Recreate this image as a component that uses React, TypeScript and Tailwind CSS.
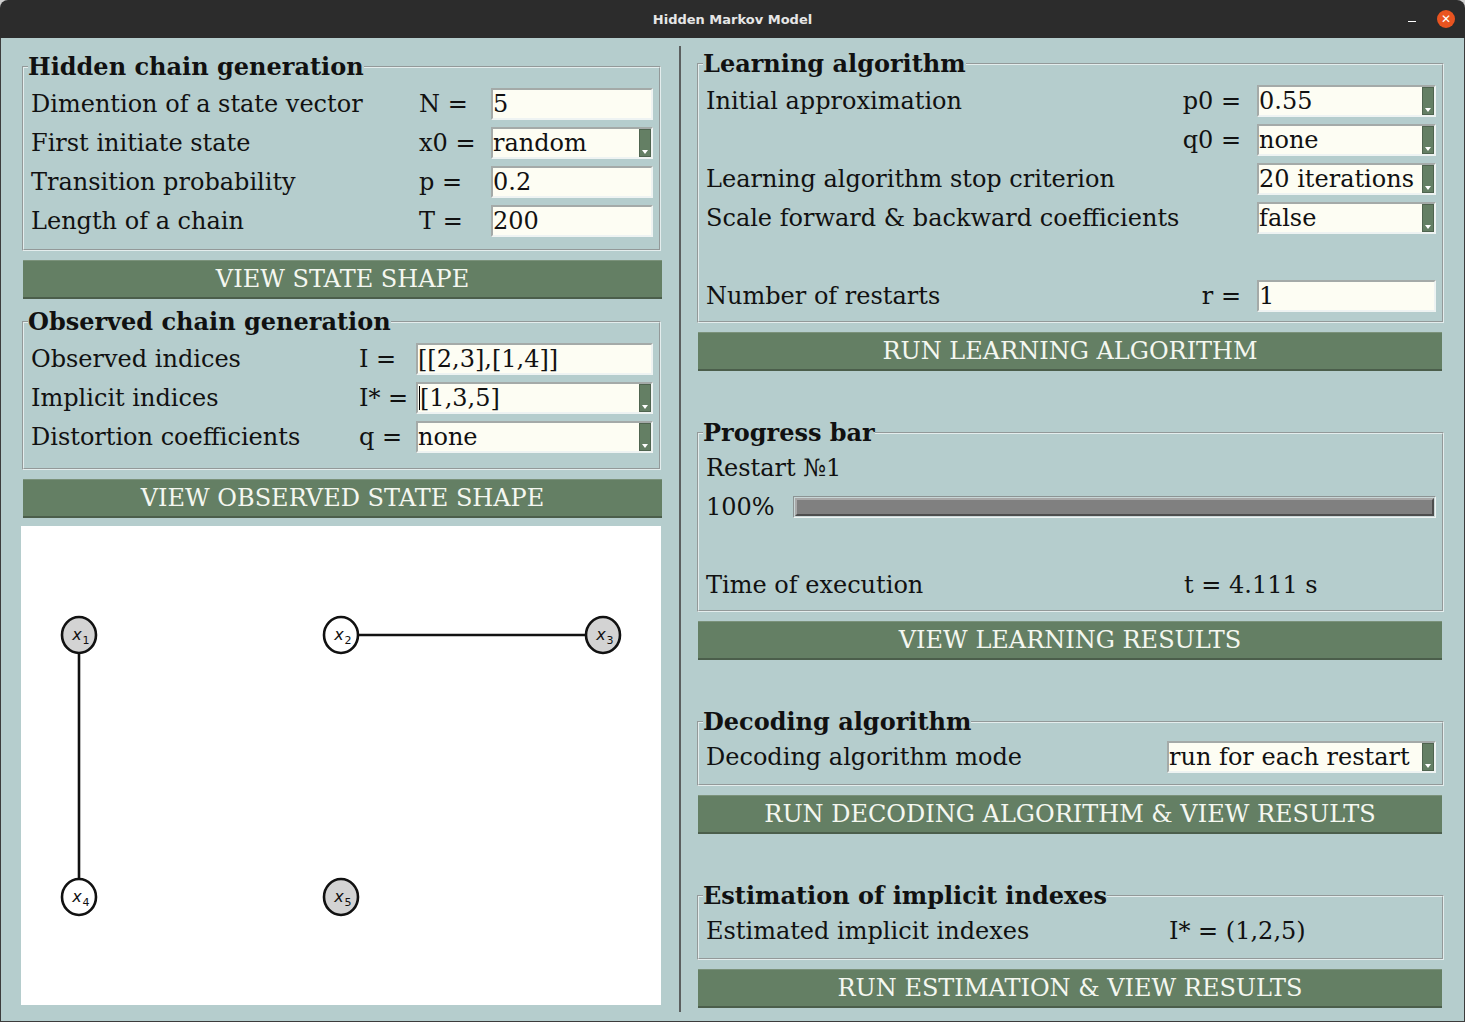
import React from "react";

const serif = "font-['DejaVu_Serif','Liberation_Serif',serif]";

function Field({
  value,
  drop,
  cursor,
  className = "",
}: {
  value: string;
  drop?: boolean;
  cursor?: boolean;
  className?: string;
}) {
  return (
    <div
      className={`h-[32px] flex items-center bg-[#fdfdf3] border-2 border-t-[#a4aaa8] border-l-[#a4aaa8] border-b-[#eef3f2] border-r-[#eef3f2] ${className}`}
    >
      {cursor && <span className="w-[1px] h-[24px] bg-black ml-[1px]" />}
      <span className="flex-1 leading-[28px] whitespace-nowrap">{value}</span>
      {drop && (
        <span className="w-[12px] h-full bg-[#647f64] border border-[#4f644f] flex items-end justify-center pb-[2px]">
          <span className="w-0 h-0 border-l-[3px] border-r-[3px] border-t-[4px] border-l-transparent border-r-transparent border-t-white" />
        </span>
      )}
    </div>
  );
}

function Group({
  title,
  children,
  className = "",
}: {
  title: string;
  children: React.ReactNode;
  className?: string;
}) {
  return (
    <fieldset
      className={`border-2 [border-style:groove] border-[#e4eded] pl-[7px] pr-[6px] min-w-0 ${className}`}
    >
      <legend className="font-bold leading-[26px] ml-[-3px] px-0">{title}</legend>
      {children}
    </fieldset>
  );
}

function Btn({ label, className = "" }: { label: string; className?: string }) {
  return (
    <div
      className={`h-[39px] flex items-center justify-center bg-[#647f64] text-[#f4f7f0] border-t border-t-[#7b927b] border-b-2 border-b-[#4b5e4b] ${className}`}
    >
      {label}
    </div>
  );
}

function Node({ x, y, n, gray }: { x: number; y: number; n: number; gray?: boolean }) {
  return (
    <g>
      <ellipse cx={x} cy={y} rx={17} ry={18} fill={gray ? "#d3d3d3" : "#ffffff"} stroke="#111" strokeWidth={2.6} />
      <text x={x - 2} y={y + 5} textAnchor="middle" fontFamily="DejaVu Sans, sans-serif" fontStyle="italic" fontSize="16" fill="#111">
        x
      </text>
      <text x={x + 7} y={y + 9} textAnchor="middle" fontFamily="DejaVu Sans, sans-serif" fontSize="11" fill="#111">
        {n}
      </text>
    </g>
  );
}

export default function App() {
  return (
    <div className={`w-[1465px] h-[1022px] flex flex-col bg-[#cfcfcf] ${serif} text-[24px] text-[#111]`}>
      {/* title bar */}
      <div className="h-[38px] shrink-0 rounded-t-[8px] bg-[#2c2c2c] flex items-center relative">
        <div className="flex-1 text-center font-['DejaVu_Sans',sans-serif] font-bold text-[13px] text-[#e6e6e6] pt-[1px]">
          Hidden Markov Model
        </div>
        <div className="absolute right-[49px] top-[21px] w-[8px] h-[1px] bg-white" />
        <div className="absolute right-[10px] top-[10px] w-[18px] h-[18px] rounded-full bg-[#e95420] flex items-center justify-center text-white font-['DejaVu_Sans',sans-serif] text-[12px] leading-none">
          ✕
        </div>
      </div>

      {/* body */}
      <div className="flex-1 flex bg-[#b5cdcd] border-x border-b border-[#3c3c3c] pl-[20px]">
        {/* left column */}
        <div className="w-[641px] flex flex-col">
          <Group title="Hidden chain generation" className="mt-[16px] ml-[1px] w-[639px] pb-[14px]">
            <div className="pt-[6px] flex flex-col gap-[7px]">
              {[
                ["Dimention of a state vector", "N =", "5", false],
                ["First initiate state", "x0 =", "random", true],
                ["Transition probability", "p =", "0.2", false],
                ["Length of a chain", "T =", "200", false],
              ].map(([l, e, v, d]) => (
                <div key={l as string} className="grid grid-cols-[388px_72px_162px] items-center h-[32px]">
                  <span className="whitespace-nowrap">{l}</span>
                  <span className="whitespace-nowrap">{e}</span>
                  <Field value={v as string} drop={d as boolean} />
                </div>
              ))}
            </div>
          </Group>
          <Btn label="VIEW STATE SHAPE" className="mt-[9px] ml-[2px] w-[639px]" />

          <Group title="Observed chain generation" className="mt-[10px] ml-[1px] w-[639px] pb-[17px]">
            <div className="pt-[6px] flex flex-col gap-[7px]">
              {[
                ["Observed indices", "I =", "[[2,3],[1,4]]", false, false],
                ["Implicit indices", "I* =", "[1,3,5]", true, true],
                ["Distortion coefficients", "q =", "none", true, false],
              ].map(([l, e, v, d, c]) => (
                <div key={l as string} className="grid grid-cols-[328px_57px_237px] items-center h-[32px]">
                  <span className="whitespace-nowrap">{l}</span>
                  <span className="whitespace-nowrap">{e}</span>
                  <Field value={v as string} drop={d as boolean} cursor={c as boolean} />
                </div>
              ))}
            </div>
          </Group>
          <Btn label="VIEW OBSERVED STATE SHAPE" className="mt-[9px] ml-[2px] w-[639px]" />

          <div className="mt-[8px] w-[640px] h-[479px] bg-white">
            <svg width="640" height="479">
              <line x1={58} y1={127} x2={58} y2={353} stroke="#111" strokeWidth={2.6} />
              <line x1={337} y1={109} x2={565} y2={109} stroke="#111" strokeWidth={2.6} />
              <Node x={58} y={109} n={1} gray />
              <Node x={320} y={109} n={2} />
              <Node x={582} y={109} n={3} gray />
              <Node x={58} y={371} n={4} />
              <Node x={320} y={371} n={5} gray />
            </svg>
          </div>
        </div>

        {/* separator */}
        <div className="ml-[17px] w-[2px] bg-[#5b5f5f] mt-[8px] mb-[9px]" />

        {/* right column */}
        <div className="ml-[16px] w-[747px] flex flex-col">
          <Group title="Learning algorithm" className="mt-[13px] w-[747px] pb-[11px]">
            <div className="pt-[6px] flex flex-col gap-[7px]">
              {[
                ["Initial approximation", "p0 =", "0.55", true],
                ["", "q0 =", "none", true],
                ["Learning algorithm stop criterion", "", "20 iterations", true],
                ["Scale forward & backward coefficients", "", "false", true],
                ["", "", "", false],
                ["Number of restarts", "r =", "1", false],
              ].map(([l, e, v, d], i) => (
                <div key={i} className="grid grid-cols-[minmax(0,1fr)_87px_179px] items-center h-[32px]">
                  <span className="whitespace-nowrap">{l}</span>
                  <span className="text-right pr-[16px] whitespace-nowrap">{e}</span>
                  {i === 4 ? <span /> : <Field value={v as string} drop={d as boolean} />}
                </div>
              ))}
            </div>
          </Group>
          <Btn label="RUN LEARNING ALGORITHM" className="mt-[9px] ml-[1px] w-[744px]" />

          <Group title="Progress bar" className="mt-[49px] w-[747px] pb-[9px]">
            <div className="pt-[6px] flex flex-col gap-[7px]">
              <div className="h-[32px] flex items-center">Restart №1</div>
              <div className="h-[32px] flex items-center">
                <span className="w-[87px]">100%</span>
                <div className="flex-1 h-[22px] border border-t-[#8c9494] border-l-[#8c9494] border-b-[#eef3f2] border-r-[#eef3f2] p-[1px] bg-[#c9d6d6]">
                  <div className="h-full bg-[#808080] border-2 border-t-[#a9a9a9] border-l-[#a9a9a9] border-b-[#4d4d4d] border-r-[#4d4d4d]" />
                </div>
              </div>
              <div className="h-[32px]" />
              <div className="h-[32px] flex items-center">
                <span className="w-[478px]">Time of execution</span>
                <span>t = 4.111 s</span>
              </div>
            </div>
          </Group>
          <Btn label="VIEW LEARNING RESULTS" className="mt-[9px] ml-[1px] w-[744px]" />

          <Group title="Decoding algorithm" className="mt-[49px] w-[747px] pb-[11px]">
            <div className="pt-[6px]">
              <div className="h-[32px] flex items-center">
                <span className="w-[461px]">Decoding algorithm mode</span>
                <Field value="run for each restart" drop className="w-[269px]" />
              </div>
            </div>
          </Group>
          <Btn label="RUN DECODING ALGORITHM & VIEW RESULTS" className="mt-[9px] ml-[1px] w-[744px]" />

          <Group title="Estimation of implicit indexes" className="mt-[49px] w-[747px] pb-[11px]">
            <div className="pt-[6px]">
              <div className="h-[32px] flex items-center">
                <span className="w-[463px]">Estimated implicit indexes</span>
                <span>I* = (1,2,5)</span>
              </div>
            </div>
          </Group>
          <Btn label="RUN ESTIMATION & VIEW RESULTS" className="mt-[9px] ml-[1px] w-[744px]" />
        </div>
      </div>
    </div>
  );
}
